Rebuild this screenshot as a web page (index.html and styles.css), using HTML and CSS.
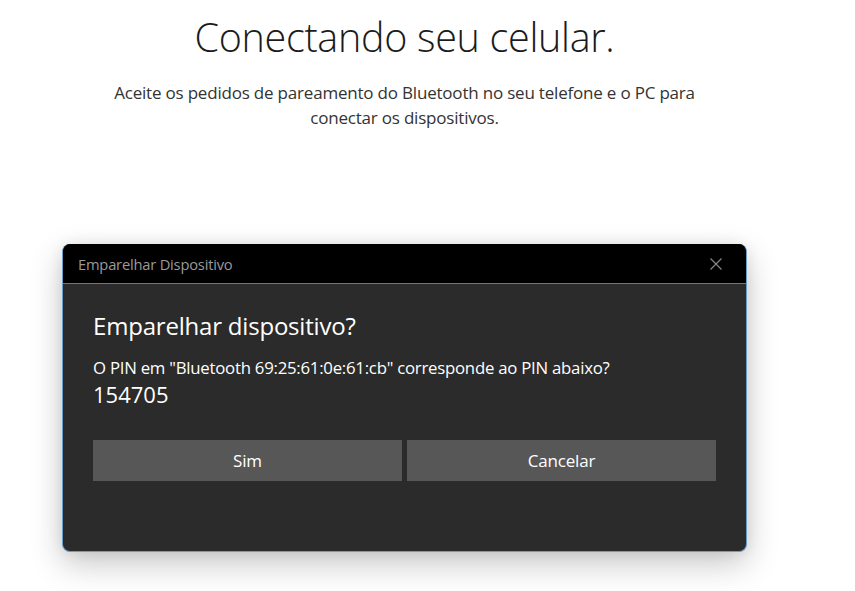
FILE: index.html
```html
<!DOCTYPE html>
<html lang="pt-BR">
<head>
    <meta charset="UTF-8">
    <title>Conectando seu celular</title>
    <link rel="stylesheet" href="styles.css">
</head>
<body>
    <div class="pagina">
        <h1 class="titulo">Conectando seu celular.</h1>
        <p class="descricao">Aceite os pedidos de pareamento do Bluetooth no seu telefone e o PC para<br>conectar os dispositivos.</p>

        <div class="janela">
            <div class="barra">
                <span class="barra-titulo">Emparelhar Dispositivo</span>
                <svg class="fechar" width="12" height="12" viewBox="0 0 12 12">
                    <path d="M0.5 0.5 L11.5 11.5 M11.5 0.5 L0.5 11.5" stroke="#8a8a8a" stroke-width="1.1" fill="none"/>
                </svg>
            </div>
            <div class="conteudo">
                <h2 class="pergunta">Emparelhar dispositivo?</h2>
                <p class="mensagem">O PIN em "Bluetooth 69:25:61:0e:61:cb" corresponde ao PIN abaixo?</p>
                <p class="pin">154705</p>
                <div class="botoes">
                    <button class="botao">Sim</button>
                    <button class="botao">Cancelar</button>
                </div>
            </div>
        </div>
    </div>
</body>
</html>
```

FILE: styles.css
```css
/* Estilos gerais */
body {
    margin: 0;
    background-color: #ffffff;
    font-family: "Open Sans", "Noto Sans", sans-serif;
}

.pagina {
    width: 809px;
    height: 591px;
    display: flex;
    flex-direction: column;
    align-items: center;
}

.titulo {
    margin: 10px 0 0;
    font-size: 39.5px;
    font-weight: 300;
    color: #1b1b1b;
    letter-spacing: -0.3px;
}

.descricao {
    margin: 16px 0 0;
    font-size: 17px;
    line-height: 25px;
    color: #333333;
    text-align: center;
    letter-spacing: -0.2px;
}

/* Janela de emparelhamento */
.janela {
    margin-top: 114px;
    width: 685px;
    height: 308px;
    flex-shrink: 0;
    background-color: #2b2b2b;
    border-radius: 8px;
    border: 1px solid #6a9ccb;
    border-top: none;
    box-sizing: border-box;
    overflow: hidden;
    box-shadow: 0 12px 32px rgba(0, 0, 0, 0.22), 0 0 14px rgba(0, 0, 0, 0.08);
}

.barra {
    height: 40px;
    box-sizing: border-box;
    background-color: #000000;
    border-bottom: 1px solid #4a7fae;
    display: flex;
    align-items: center;
    justify-content: space-between;
    padding: 0 24px 0 15px;
}

.barra-titulo {
    font-size: 14.7px;
    color: #9a9a9a;
    letter-spacing: -0.2px;
}

.conteudo {
    padding: 25px 30px 0 30px;
    color: #ffffff;
}

.pergunta {
    margin: 0;
    font-size: 24px;
    font-weight: 400;
    letter-spacing: -0.2px;
}

.mensagem {
    margin: 14px 0 0;
    font-size: 16.8px;
    letter-spacing: -0.25px;
}

.pin {
    margin: 0;
    font-size: 22px;
}

.botoes {
    margin-top: 31px;
    display: flex;
    gap: 5px;
}

.botao {
    width: 309px;
    height: 41px;
    background-color: #575757;
    color: #ffffff;
    border: none;
    font-family: inherit;
    font-size: 17px;
    letter-spacing: -0.2px;
}
```
